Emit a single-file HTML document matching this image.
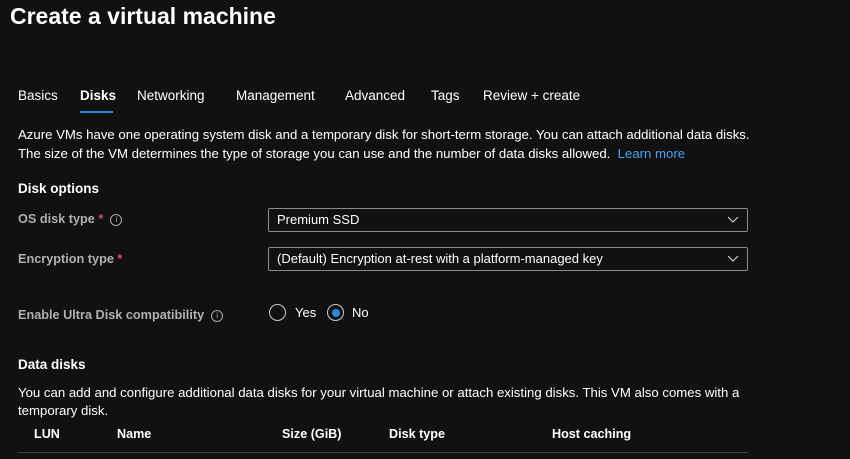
<!DOCTYPE html>
<html><head><style>
body{margin:0;width:850px;height:459px;background:#111111;color:#fff;font-family:"Liberation Sans",sans-serif;overflow:hidden;position:relative}
.a{position:absolute;white-space:nowrap}
.t{font-size:13.5px}
.lbl{color:#b0b0b0;font-size:12.7px;font-weight:bold}
.req{color:#e0495a}
.info{display:inline-block;width:10px;height:10px;border:1px solid #aaa;border-radius:50%;font-size:8px;line-height:10px;text-align:center;color:#aaa;font-weight:normal;vertical-align:1px}
.sel{position:absolute;left:268px;width:470px;height:22px;border:1px solid #8a8a8a;border-radius:2px;font-size:13px;line-height:22px;padding-left:8px;box-sizing:content-box}
.chev{position:absolute;right:8px;top:7px}
.radio{position:absolute;width:17px;height:17px;border:1px solid #ccc;border-radius:50%;box-sizing:border-box}
</style></head><body>
<div class="a" style="left:10px;top:3px;font-size:23px;font-weight:bold">Create a virtual machine</div>
<div class="a t" style="left:18px;top:88px">Basics</div>
<div class="a t" style="left:80px;top:88px;font-weight:bold">Disks</div>
<div class="a" style="left:80px;top:111px;width:33px;height:2px;background:#2b88d8"></div>
<div class="a t" style="left:137px;top:88px">Networking</div>
<div class="a t" style="left:236px;top:88px">Management</div>
<div class="a t" style="left:345px;top:88px">Advanced</div>
<div class="a t" style="left:431px;top:88px">Tags</div>
<div class="a t" style="left:483px;top:88px">Review + create</div>
<div class="a" style="left:18px;top:125px;font-size:13.2px;line-height:19px">Azure VMs have one operating system disk and a temporary disk for short-term storage. You can attach additional data disks.<br>The size of the VM determines the type of storage you can use and the number of data disks allowed. &nbsp;<span style="color:#4aa0ec">Learn more</span></div>
<div class="a" style="left:18px;top:181px;font-size:13.5px;font-weight:bold">Disk options</div>
<div class="a lbl" style="left:18px;top:212px">OS disk type <span class="req">*</span> &nbsp;<span class="info">i</span></div>
<div class="sel" style="top:208px">Premium SSD<svg class="chev" width="12" height="8" viewBox="0 0 12 8"><path d="M1 1l5 5 5-5" stroke="#ddd" fill="none"/></svg></div>
<div class="a lbl" style="left:18px;top:252px">Encryption type <span class="req">*</span></div>
<div class="sel" style="top:247px">(Default) Encryption at-rest with a platform-managed key<svg class="chev" width="12" height="8" viewBox="0 0 12 8"><path d="M1 1l5 5 5-5" stroke="#ddd" fill="none"/></svg></div>
<div class="a lbl" style="left:18px;top:308px">Enable Ultra Disk compatibility &nbsp;<span class="info">i</span></div>
<div class="radio" style="left:269px;top:304px"></div>
<div class="a" style="left:295px;top:305px;font-size:13px">Yes</div>
<div class="radio" style="left:327px;top:304px"><div style="position:absolute;left:3.5px;top:3.5px;width:8px;height:8px;border-radius:50%;background:#2b88d8"></div></div>
<div class="a" style="left:352px;top:305px;font-size:13px">No</div>
<div class="a" style="left:18px;top:357px;font-size:13.5px;font-weight:bold">Data disks</div>
<div class="a" style="left:18px;top:384px;font-size:13.2px;line-height:18px">You can add and configure additional data disks for your virtual machine or attach existing disks. This VM also comes with a<br>temporary disk.</div>
<div class="a" style="left:34px;top:427px;font-size:12.6px;font-weight:bold">LUN</div>
<div class="a" style="left:117px;top:427px;font-size:12.6px;font-weight:bold">Name</div>
<div class="a" style="left:282px;top:427px;font-size:12.6px;font-weight:bold">Size (GiB)</div>
<div class="a" style="left:389px;top:427px;font-size:12.6px;font-weight:bold">Disk type</div>
<div class="a" style="left:552px;top:427px;font-size:12.6px;font-weight:bold">Host caching</div>
<div class="a" style="left:18px;top:452px;width:730px;height:1px;background:#444"></div>
</body></html>
